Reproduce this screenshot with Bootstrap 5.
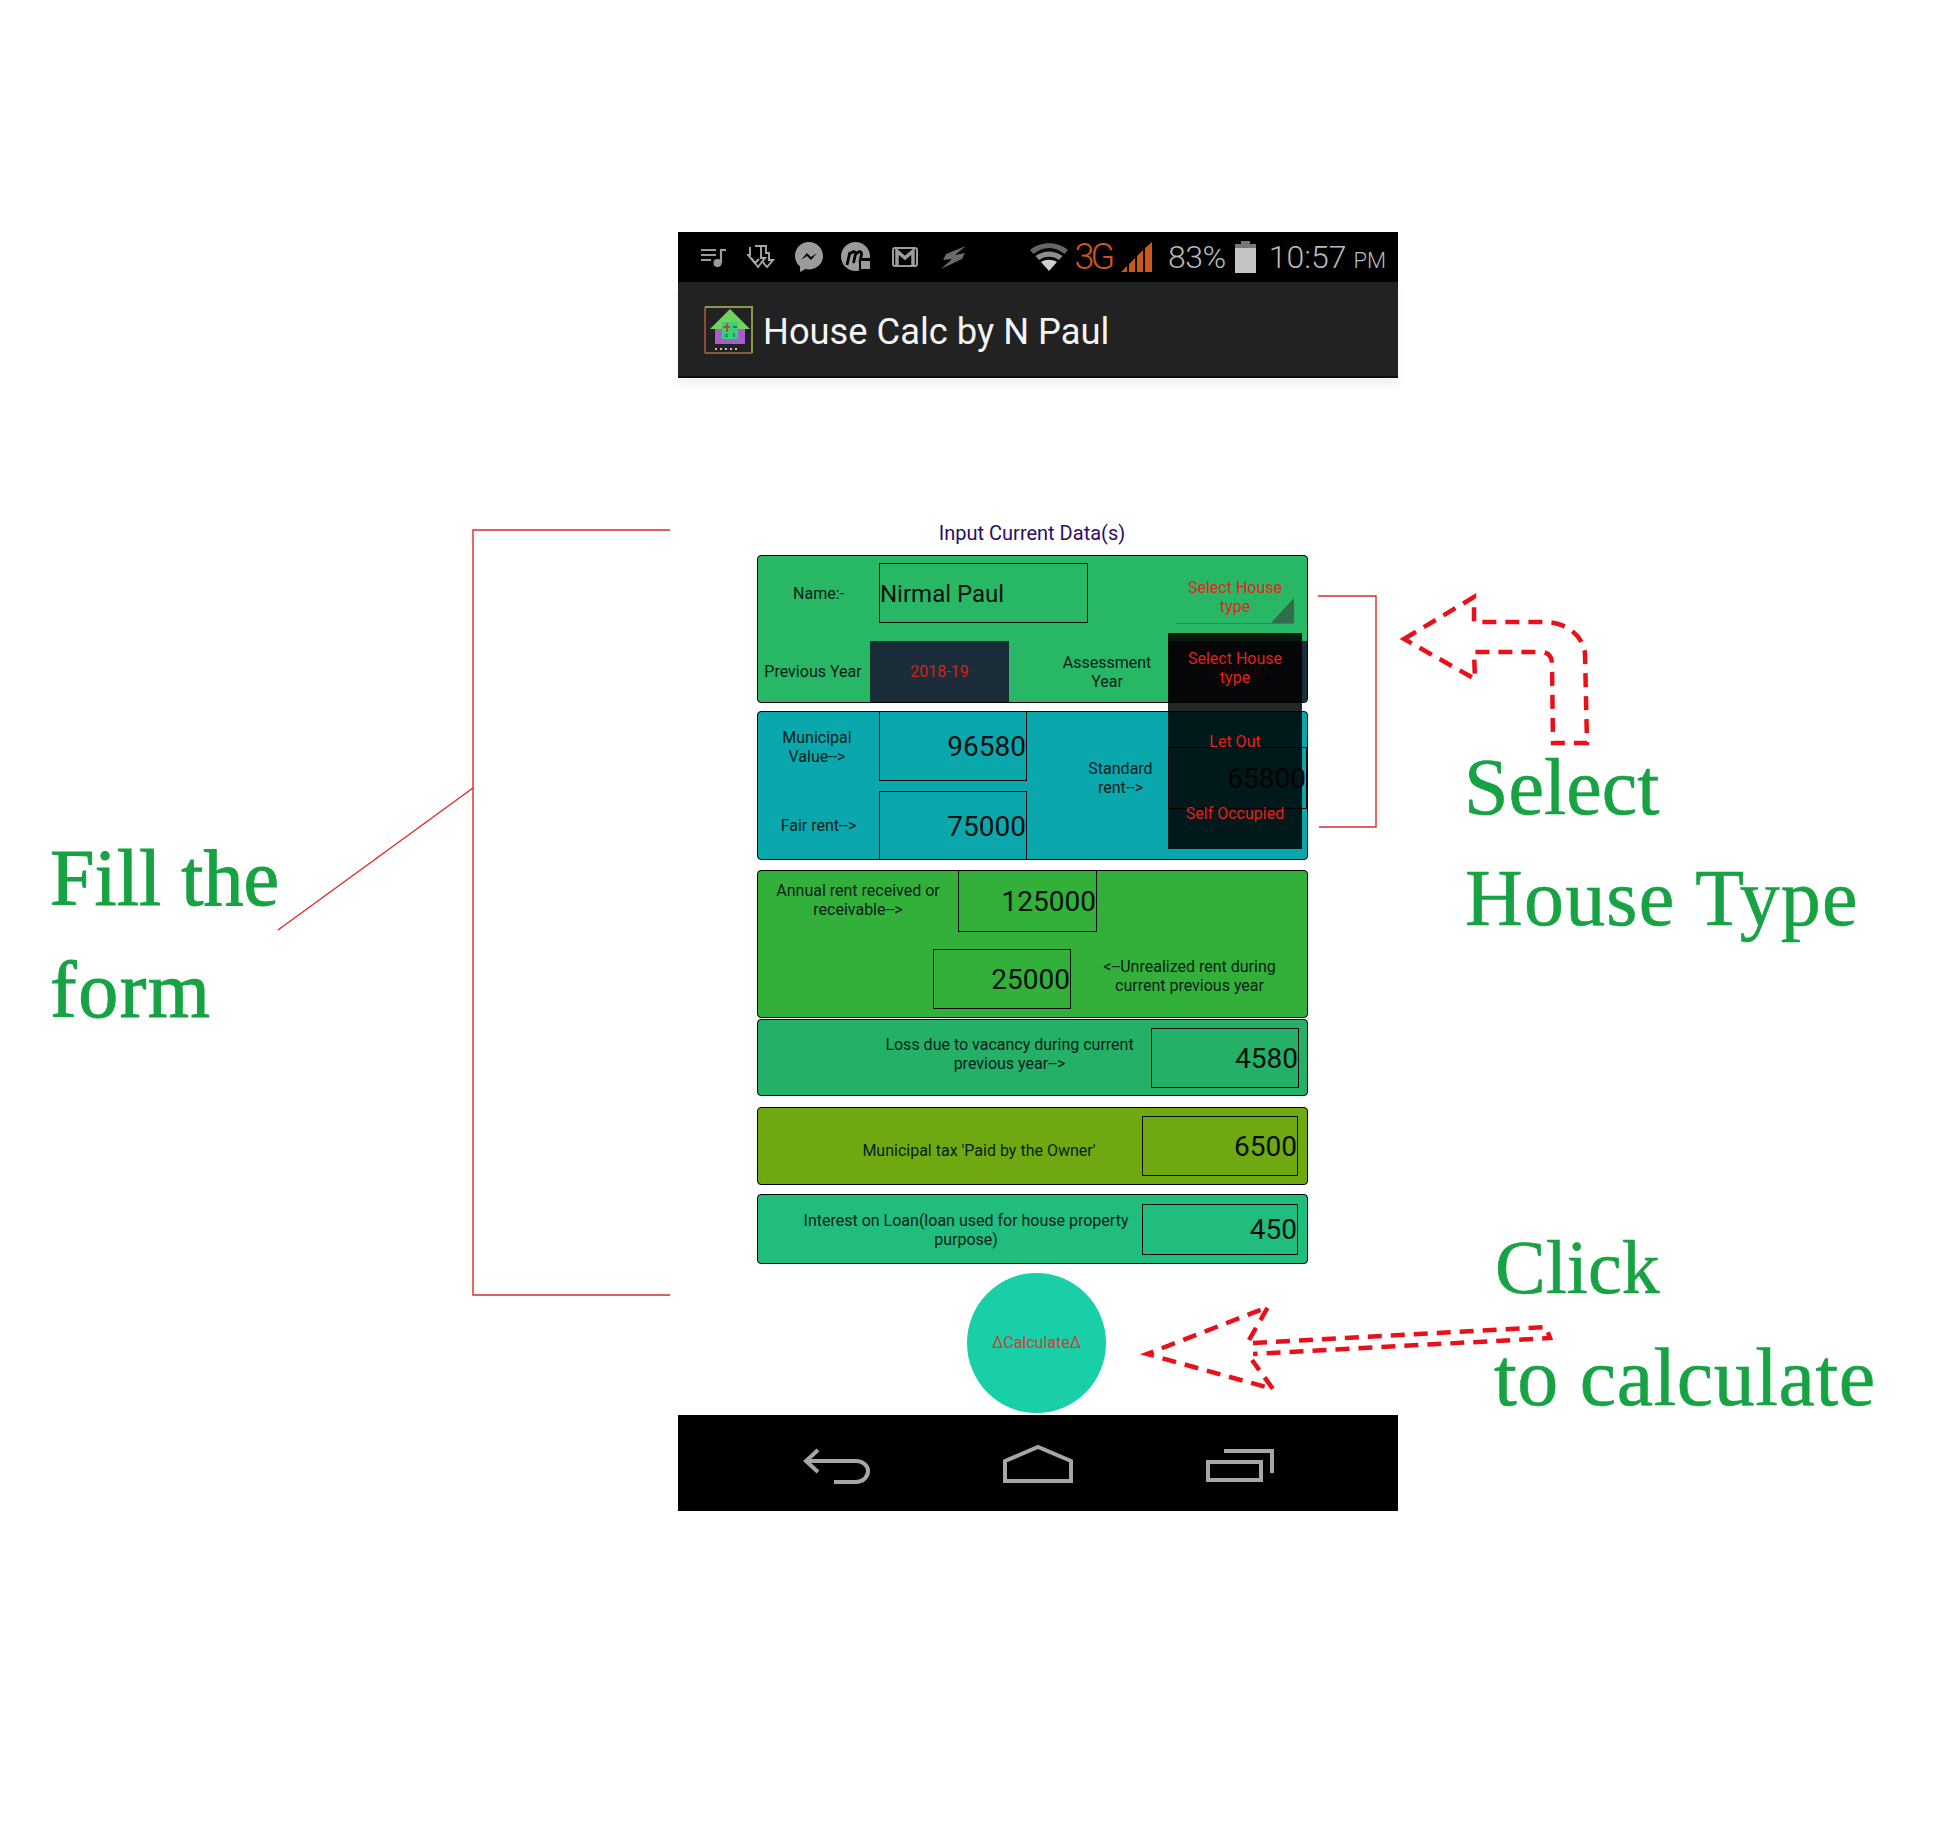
<!DOCTYPE html>
<html lang="en">
<head>
  <meta charset="UTF-8" />
  <meta name="viewport" content="width=device-width, initial-scale=1.0"/>
  <title>House Calc by N Paul</title>
  <link href="https://cdn.jsdelivr.net/npm/bootstrap@5.3.0/dist/css/bootstrap.min.css" rel="stylesheet"/>
  <style>
    body { background: #fff; font-family: Roboto, "Liberation Sans", sans-serif; margin: 0; }
    .sheet { position: relative; width: 1936px; height: 1839px; overflow: hidden; padding: 232px 0 0 678px; }
    .phone { width: 720px; height: 1279px; position: relative; }

    .status-bar { height: 50px; background: #000; color: #b9b9b9; padding: 0 12px 0 11px; }
    .slot { width: 48px; }
    .wifi-icon { margin-right: 6px; }
    .net-type { font-size: 36px; font-weight: 300; letter-spacing: -4px; color: #c8591a; margin-right: 10px; line-height: 1; }
    .signal-icon { margin-right: 16px; }
    .batt-text { font-size: 32px; font-weight: 300; margin-right: 9px; line-height: 1; letter-spacing: -.5px; }
    .batt-icon { margin-right: 13px; }
    .clock-text { font-size: 32px; font-weight: 300; margin-right: 7px; line-height: 1; }
    .clock-ampm { font-size: 22px; font-weight: 300; line-height: 1; margin-top: 7px; }

    .action-bar { height: 96px; background: #222; border-bottom: 2px solid #0e0e0e; padding-left: 26px; box-shadow: 0 7px 9px rgba(0,0,0,.06); }
    .app-icon { margin-top: 2px; }
    .app-title { font-size: 36.300px; color: #f4f4f4; margin: 6px 0 0 10px; line-height: 1; }

    .form-area { height: 1037px; padding: 143px 0 0 79px; }
    .form-title { width: 550px; font-size: 20px; line-height: 24px; color: #2c0d63; text-align: center; margin-bottom: 10px; }

    .calc-panel { width: 551px; border: 1px solid #000; border-radius: 4px; overflow: hidden; }
    .panel-a { height: 148px; background: #28b765; margin-bottom: 8px; }
    .panel-b { height: 149px; background: #0aa8ac; margin-bottom: 10px; }
    .panel-c { height: 148px; background: #33b03a; margin-bottom: 1px; }
    .panel-d { height: 77px; background: #24b066; margin-bottom: 11px; }
    .panel-e { height: 78px; background: #70a812; margin-bottom: 9px; }
    .panel-f { height: 70px; background: #20bd7d; margin-bottom: 9px; }

    .calc-label { font-size: 16px; line-height: 19px; text-align: center; color: #08201a; }
    .calc-value { border: 1px solid #0a0a0a; font-size: 28px; line-height: 1; color: #060f0c; white-space: nowrap; padding-top: 2px; }

    /* panel a */
    .name-row { height: 60px; margin-top: 7px; }
    .name-label { width: 121px; }
    .name-value { width: 209px; height: 60px; font-size: 24px; }
    .type-select { width: 118px; height: 60px; margin: 2px 13px 0 auto; color: #e2261f; border-bottom: 1px solid #2c8a55; position: relative; padding-top: 6px; }
    .type-corner { position: absolute; right: 0; bottom: 0; }
    .year-row { height: 61px; margin-top: auto; }
    .prev-label { width: 110px; margin-right: 2px; }
    .prev-year { width: 139px; background: #1c2d3a; color: #d5201c; font-size: 16px; }
    .assess-label { width: 159px; padding-left: 37px; }
    .assess-year { width: 139px; background: #1c2d3a; color: #d5201c; font-size: 16px; }

    /* panel b */
    .rent-left { width: 269px; gap: 10px; }
    .rent-row-top { height: 69px; }
    .rent-row-low { height: 68px; }
    .rent-label { width: 121px; }
    .rent-label-top { padding-right: 3px; }
    .rent-value { width: 148px; height: 100%; }
    .rent-value-top { border-top: 0; }
    .rent-value-low { border-bottom: 0; }
    .std-row { height: 62px; margin-top: 35px; }
    .std-label { width: 141px; padding-left: 46px; }
    .std-value { width: 139px; height: 62px; }

    /* panel c */
    .annual-label { width: 200px; padding-top: 10px; }
    .annual-row { height: 61px; }
    .annual-value { width: 139px; height: 61px; border-top: 0; }
    .unreal-row { margin-top: 17px; padding-left: 175px; }
    .unreal-value { width: 138px; height: 60px; }
    .unreal-label { width: 235px; padding-left: 2px; margin-bottom: 7px; }

    /* panels d, e, f */
    .loss-label { width: 393px; padding-left: 110px; margin-bottom: 8px; }
    .loss-value { width: 148px; height: 60px; }
    .tax-label { width: 384px; padding-left: 58px; margin-top: 9px; }
    .tax-value { width: 156px; height: 60px; }
    .loan-label { width: 384px; padding-left: 32px; margin-top: 1px; }
    .loan-value { width: 156px; height: 51px; }

    .calc-btn { width: 139px; height: 140px; margin-left: 210px; background: #18cfa8; color: #c2443a; font-size: 16px; border-radius: 50%; }

    .house-menu { position: absolute; left: 490px; top: 401px; width: 134px; height: 216px; background: rgba(0,0,0,.85); color: #e3201b; font-size: 16px; line-height: 19px; text-align: center; }
    .house-menu > div { height: 72px; }
    .house-menu > .menu-first { padding-bottom: 2px; }

    .nav-bar { height: 96px; background: #000; }
    .nav-slot { width: 202px; }

    .note-lines { position: absolute; left: 0; top: 0; pointer-events: none; }
    .note { position: absolute; font-family: "Liberation Serif", serif; font-size: 80px; line-height: 1; color: #17a244; white-space: nowrap; -webkit-text-stroke: .6px #17a244; }
    .note-select { left: 1464px; top: 747px; }
    .note-house { left: 1465px; top: 858px; letter-spacing: 1.200px; }
    .note-click { left: 1495px; top: 1229px; font-size: 76px; }
    .note-calc { left: 1494px; top: 1337px; font-size: 82px; letter-spacing: .5px; }
    .note-fill { left: 50px; top: 838px; -webkit-text-stroke-width: 1px; }
    .note-form { left: 50px; top: 950px; letter-spacing: 1.500px; -webkit-text-stroke-width: 1px; }
  </style>
</head>
<body>
  <div class="sheet">
    <div class="phone d-flex flex-column">

      <div class="status-bar d-flex align-items-center">
        <div class="slot d-flex justify-content-center">
          <svg width="26" height="22" viewBox="0 0 26 22" fill="none" stroke="#9c9c9c" stroke-width="2.200">
            <path d="M1 4h15M1 9h15M1 14h10"/><path d="M21 4h5"/><path d="M21 3v14"/><circle cx="17.500" cy="17" r="4" fill="#9c9c9c" stroke="none"/>
          </svg>
        </div>
        <div class="slot d-flex justify-content-center">
          <svg width="28" height="24" viewBox="0 0 28 24" fill="none" stroke="#a8a8a8" stroke-width="1.900">
            <path d="M3 2v8H1l7 8 4-4"/><path d="M8 1h6v12h4l-7 9-7-9"/><path d="M14 1h5v8"/><path d="M19 8h3v7h4l-6 7-5-6"/>
          </svg>
        </div>
        <div class="slot d-flex justify-content-center">
          <svg width="28" height="30" viewBox="0 0 28 30">
            <path d="M14 0C6 0 0 6 0 14c0 4.500 2 8 5 10.500V30l5.500-3c1 .3 2.300.4 3.500.4 8 0 14-6 14-13.400S22 0 14 0z" fill="#9c9c9c"/>
            <path d="M6 18l6-7 4 4 6-4-6 7-4-4z" fill="#000"/>
          </svg>
        </div>
        <div class="slot d-flex justify-content-center">
          <svg width="32" height="30" viewBox="0 0 32 30">
            <circle cx="14.500" cy="14.500" r="14.500" fill="#9c9c9c"/>
            <path d="M6 23l3-13M9 12c2-3 6-3 5.500 0l-2 9M15 12c2-3 6-3 5.500 0L19 20" fill="none" stroke="#000" stroke-width="2.800"/>
            <rect x="18" y="16" width="14" height="14" rx="2" fill="#000"/><rect x="20" y="19" width="9" height="8" fill="#9c9c9c"/>
          </svg>
        </div>
        <div class="slot d-flex justify-content-center">
          <svg width="26" height="20" viewBox="0 0 26 20">
            <rect x="1" y="1" width="24" height="18" rx="2" fill="#000" stroke="#9c9c9c" stroke-width="2"/>
            <path d="M5 18V4l8 7 8-7v14" fill="none" stroke="#9c9c9c" stroke-width="3.500"/>
          </svg>
        </div>
        <div class="slot d-flex justify-content-center">
          <svg width="25" height="23" viewBox="0 0 25 23"><path d="M25 0L5 8 2 14l9-1L0 23l21-10 3-6-10 2z" fill="#6a6a6a"/></svg>
        </div>

        <div class="ms-auto d-flex align-items-center">
          <svg class="wifi-icon" width="38" height="28" viewBox="0 0 38 28">
            <path d="M0 7C10-2 28-2 38 7l-3.500 4C25 3 13 3 3.500 11z" fill="#666"/>
            <path d="M5.500 13c8-6 19-6 27 0l-3.500 4c-6-4.500-14-4.500-20 0z" fill="#8c8c8c"/>
            <path d="M11 19c4.500-3 11.500-3 16 0l-8 9z" fill="#cfcfcf"/>
          </svg>
          <div class="net-type">3G</div>
          <svg class="signal-icon" width="31" height="30" viewBox="0 0 31 30" fill="#c8591a">
            <path d="M0 30l6-6v6zM8 30v-8l6-6v14zM16 30V14l6-6v22zM24 30V6l7-6v30z"/>
          </svg>
          <div class="batt-text">83%</div>
          <svg class="batt-icon" width="21" height="32" viewBox="0 0 21 32" fill="#c4c4c4">
            <rect x="6" width="9" height="3" fill="#777"/><rect y="3" width="21" height="4" fill="#777"/><rect y="7" width="21" height="25"/>
          </svg>
          <div class="clock-text">10:57</div>
          <div class="clock-ampm">PM</div>
        </div>
      </div>

      <div class="action-bar d-flex align-items-center">
        <svg class="app-icon" width="49" height="48" viewBox="0 0 49 48">
          <path d="M1 47V1" stroke="#8a4a3c" stroke-width="2" fill="none"/>
          <path d="M1 47h47" stroke="#8a5a3c" stroke-width="2" fill="none"/>
          <path d="M1 1h47v46" stroke="#87994a" stroke-width="2" fill="none"/>
          <rect x="11" y="22" width="30" height="16" fill="#a65fc9"/>
          <path d="M26 3L6 23h40z" fill="#6fd35f"/>
          <rect x="18" y="16" width="16" height="17" fill="#3ccf7a"/>
          <path d="M23 17v9M19 21h7" stroke="#e0282a" stroke-width="1.500"/>
          <path d="M29 21h4" stroke="#1c5a3a" stroke-width="1.500"/>
          <path d="M21 28l3 3M24 28l-3 3M30 27v4" stroke="#123c8c" stroke-width="1"/>
          <path d="M11 43h24" stroke="#c9c9a0" stroke-width="2" stroke-dasharray="2 3"/>
        </svg>
        <div class="app-title">House Calc by N Paul</div>
      </div>

      <div class="form-area">
        <div class="form-title">Input Current Data(s)</div>

        <div class="calc-panel panel-a d-flex flex-column">
          <div class="name-row d-flex align-items-center">
            <div class="calc-label name-label">Name:-</div>
            <div class="calc-value name-value d-flex align-items-center">Nirmal Paul</div>
            <div class="calc-label type-select d-flex align-items-center justify-content-center">
              <span>Select House<br>type</span>
              <svg class="type-corner" width="23" height="25" viewBox="0 0 23 25"><path d="M23 0v25H0z" fill="#2f6d4b"/></svg>
            </div>
          </div>
          <div class="year-row d-flex align-items-stretch">
            <div class="calc-label prev-label d-flex align-items-center justify-content-center">Previous Year</div>
            <div class="prev-year d-flex align-items-center justify-content-center">2018-19</div>
            <div class="calc-label assess-label d-flex align-items-center justify-content-center"><span>Assessment<br>Year</span></div>
            <div class="assess-year d-flex align-items-center justify-content-center">2019-20</div>
          </div>
        </div>

        <div class="calc-panel panel-b d-flex">
          <div class="rent-left d-flex flex-column">
            <div class="rent-row-top d-flex align-items-center">
              <div class="calc-label rent-label rent-label-top">Municipal<br>Value--&gt;</div>
              <div class="calc-value rent-value rent-value-top d-flex align-items-center justify-content-end">96580</div>
            </div>
            <div class="rent-row-low d-flex align-items-center">
              <div class="calc-label rent-label">Fair rent--&gt;</div>
              <div class="calc-value rent-value rent-value-low d-flex align-items-center justify-content-end">75000</div>
            </div>
          </div>
          <div class="std-row d-flex align-items-center">
            <div class="calc-label std-label">Standard<br>rent--&gt;</div>
            <div class="calc-value std-value d-flex align-items-center justify-content-end">65800</div>
          </div>
        </div>

        <div class="calc-panel panel-c">
          <div class="annual-row d-flex">
            <div class="calc-label annual-label">Annual rent received or<br>receivable--&gt;</div>
            <div class="calc-value annual-value d-flex align-items-center justify-content-end">125000</div>
          </div>
          <div class="unreal-row d-flex align-items-center">
            <div class="calc-value unreal-value d-flex align-items-center justify-content-end">25000</div>
            <div class="calc-label unreal-label">&lt;--Unrealized rent during<br>current previous year</div>
          </div>
        </div>

        <div class="calc-panel panel-d d-flex align-items-center">
          <div class="calc-label loss-label">Loss due to vacancy during current<br>previous year--&gt;</div>
          <div class="calc-value loss-value d-flex align-items-center justify-content-end">4580</div>
        </div>

        <div class="calc-panel panel-e d-flex align-items-center">
          <div class="calc-label tax-label">Municipal tax 'Paid by the Owner'</div>
          <div class="calc-value tax-value d-flex align-items-center justify-content-end">6500</div>
        </div>

        <div class="calc-panel panel-f d-flex align-items-center">
          <div class="calc-label loan-label">Interest on Loan(loan used for house property<br>purpose)</div>
          <div class="calc-value loan-value d-flex align-items-center justify-content-end">450</div>
        </div>

        <div class="calc-btn d-flex align-items-center justify-content-center">ΔCalculateΔ</div>
      </div>

      <div class="house-menu d-flex flex-column">
        <div class="menu-first d-flex align-items-center justify-content-center"><span>Select House<br>type</span></div>
        <div class="d-flex align-items-center justify-content-center">Let Out</div>
        <div class="d-flex align-items-center justify-content-center">Self Occupied</div>
      </div>

      <div class="nav-bar d-flex align-items-center justify-content-center">
        <div class="nav-slot d-flex justify-content-center">
          <svg width="72" height="44" viewBox="0 0 72 44" fill="none" stroke="#a6a6a6" stroke-width="4">
            <path d="M18 9L6 20l12 11"/><path d="M6 20h50c6 0 12 4 12 10s-5 11-12 11H34"/>
          </svg>
        </div>
        <div class="nav-slot d-flex justify-content-center">
          <svg width="72" height="44" viewBox="0 0 72 44" fill="none" stroke="#a6a6a6" stroke-width="4">
            <path d="M3 20L36 6l33 14v20H3z"/>
          </svg>
        </div>
        <div class="nav-slot d-flex justify-content-center">
          <svg width="72" height="44" viewBox="0 0 72 44" fill="none" stroke="#a6a6a6" stroke-width="4">
            <rect x="4" y="21" width="53" height="18"/><path d="M20 10h48v22"/>
          </svg>
        </div>
      </div>
    </div>

    <svg class="note-lines" width="1936" height="1839" viewBox="0 0 1936 1839" fill="none">
      <g stroke="#d92b2b" stroke-width="1.400">
        <path d="M670 530H473V1295H670"/>
        <path d="M473 788L278 930"/>
        <path d="M1318 596H1376V827H1319"/>
      </g>
      <g stroke="#e8101a" stroke-width="4.500" stroke-dasharray="14 9">
        <path d="M1404 639L1474 597V622H1545C1570 622 1585 640 1585 655L1587 743H1553L1552 665C1552 657 1550 652 1540 652H1474L1475 679Z"/>
        <path d="M1249 1340L1268 1307L1147 1354L1273 1389L1252 1360"/>
        <path d="M1253 1343L1546 1327L1550 1338L1253 1354"/>
      </g>
    </svg>
    <div class="note note-select">Select</div>
    <div class="note note-house">House Type</div>
    <div class="note note-click">Click</div>
    <div class="note note-calc">to calculate</div>
    <div class="note note-fill">Fill the</div>
    <div class="note note-form">form</div>
  </div>

  <script src="https://cdn.jsdelivr.net/npm/bootstrap@5.3.0/dist/js/bootstrap.bundle.min.js"></script>
</body>
</html>
